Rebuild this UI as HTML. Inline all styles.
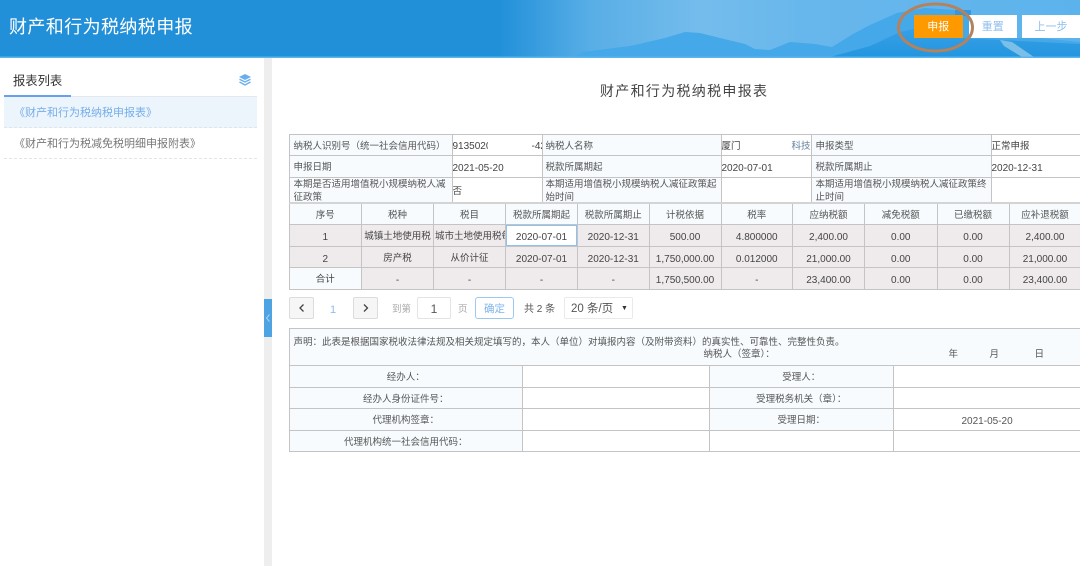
<!DOCTYPE html>
<html lang="zh">
<head>
<meta charset="utf-8">
<title>财产和行为税纳税申报</title>
<style>
*{box-sizing:border-box}
html,body{margin:0;padding:0;width:1080px;height:566px;overflow:hidden;background:#fff;
font-family:"Liberation Sans","Noto Sans CJK SC",sans-serif;color:#555}
#all{position:absolute;left:0;top:0;width:1080px;height:566px;overflow:hidden;filter:blur(.35px)}
.abs{position:absolute}
#hdr{position:absolute;left:0;top:0;width:1080px;height:58px;overflow:hidden;background:linear-gradient(90deg,#2290d9 0,#2290d9 500px,#58aee6 590px,#74bcec 700px,#68b7ec 800px,#5cb3ec 1080px)}
#hdr h1{position:absolute;left:9px;top:15px;margin:0;font-size:18px;line-height:25px;font-weight:400;color:#fff;letter-spacing:.4px;white-space:nowrap}
.btn{position:absolute;top:15px;height:23px;line-height:25px;text-align:center;font-size:11px;background:#fff;color:#8fbfee}
#side{position:absolute;left:0;top:58px;width:264px;height:508px;background:#fff}
#gut{position:absolute;left:264px;top:58px;width:8px;height:508px;background:#eeeeee}
#handle{position:absolute;left:264px;top:299px;width:8px;height:38px;background:#4ea3e3}
.tabline{position:absolute;left:4px;top:96px;width:253px;height:1px;background:#e4e8ee}
.tabact{position:absolute;left:4px;top:95px;width:67px;height:2px;background:#68a0ee}
.item{position:absolute;left:4px;width:253px;height:31px;line-height:32px;font-size:11px;padding-left:10px;white-space:nowrap;border-bottom:1px dashed #dfe5ea;color:#777}
table{position:absolute;border-collapse:collapse;table-layout:fixed;font-size:9.5px;color:#555}
td{border:1px solid #c4c4c4;padding:4px 0 0;overflow:hidden;white-space:nowrap;text-align:center;line-height:12px}
.l{background:#f7fbfd}
.tl{text-align:left;padding-left:4px}
.g{background:#efebec}
.n{font-size:10px;color:#444}
.n td{padding-top:6px}
.v{text-align:left;font-size:10px;color:#444;padding-top:4px}
.wrap{white-space:normal;text-align:left;padding:0 4px}
.wrap div{position:relative;top:1px;height:24px;overflow:hidden;line-height:12.5px}
.pbtn{position:absolute;top:297px;height:22px;border:1px solid #dcdcdc;border-radius:2px;background:#f6f6f6}
.ptxt{position:absolute;top:298px;line-height:24px;height:22px;font-size:10px;white-space:nowrap}
</style>
</head>
<body>
<div id="all">
<div id="hdr">
<svg class="abs" style="left:0;top:0" width="1080" height="58" viewBox="0 0 1080 58">
<defs><linearGradient id="rg" x1="0" y1="0" x2="0" y2="1"><stop offset="0" stop-color="#3aa1e6"/><stop offset="1" stop-color="#2295df"/></linearGradient></defs>
<path d="M575 57 L582 52 L630 46 L665 38 L685 32 L700 33 L720 38 L745 44 L755 49 L770 50 L790 42 L815 44 L832 47 L853 34 L870 25 L897 13 L925 8 L955 10 L985 20 L1000 38 L1040 38 L1080 42 L1080 58 L575 58 Z" fill="#45a8e9"/>
<path d="M830 57 L870 46 L900 32 L930 25 L960 38 L1000 40 L1080 44 L1080 58 L830 58Z" fill="url(#rg)"/>
<path d="M1000 40 L1012 42 L1034 57 L1022 57 L1004 46Z" fill="#7bbfe9"/>
<rect x="955" y="10" width="16" height="6" fill="#2f9ae3"/>
<rect x="0" y="56.5" width="1080" height="1.5" fill="#5ab5f0"/>
</svg>
<h1>财产和行为税纳税申报</h1>
<div class="btn" style="left:913.5px;width:49.5px;background:#fe9900;color:#fff">申报</div>
<div class="btn" style="left:968.5px;width:48.5px">重置</div>
<div class="btn" style="left:1022px;width:58px">上一步</div>
<svg class="abs" style="left:890px;top:0" width="90" height="58" viewBox="890 0 90 58">
<ellipse cx="935.5" cy="27.5" rx="37" ry="23.5" fill="none" stroke="#b5825c" stroke-width="3"/>
</svg>
</div>

<div id="side"></div>
<div id="gut"></div>
<div id="handle">
<svg width="8" height="38" viewBox="0 0 8 38"><path d="M5.5 15.5 L2.5 19 L5.5 22.5" fill="none" stroke="#a9d3f3" stroke-width="1"/></svg>
</div>

<div class="abs" style="left:13px;top:72px;font-size:12.3px;line-height:18px;color:#333;white-space:nowrap">报表列表</div>
<svg class="abs" style="left:238px;top:73px" width="14" height="14" viewBox="0 0 14 14">
<path d="M7 1 L13 4 L7 7 L1 4Z" fill="#6aaef0"/>
<path d="M1.5 6.3 L7 9 L12.5 6.3" fill="none" stroke="#6aaef0" stroke-width="1.4"/>
<path d="M1.5 9 L7 12 L12.5 9" fill="none" stroke="#6aaef0" stroke-width="1.4"/>
</svg>
<div class="tabline"></div>
<div class="tabact"></div>
<div class="item" style="top:97px;background:#ecf4fc;color:#76aeea">《财产和行为税纳税申报表》</div>
<div class="item" style="top:128px">《财产和行为税减免税明细申报附表》</div>

<div class="abs" style="left:600px;top:81px;font-size:14px;line-height:20px;letter-spacing:1.3px;color:#444;white-space:nowrap">财产和行为税纳税申报表</div>

<table style="left:288.5px;top:134px;width:797px">
<colgroup><col style="width:163px"><col style="width:90px"><col style="width:179px"><col style="width:90px"><col style="width:180px"><col style="width:95px"></colgroup>
<tr style="height:21px">
<td class="l tl">纳税人识别号（统一社会信用代码）</td>
<td class="v" style="position:relative;padding:0"><span style="position:absolute;left:0;top:6px;width:35px;overflow:hidden">9135020</span><span style="position:absolute;right:0;top:6px;width:10px;overflow:hidden">-42</span></td>
<td class="l tl" style="padding-left:3px">纳税人名称</td>
<td class="v" style="position:relative;font-size:9.5px;padding:0"><span style="position:absolute;left:0;top:6px">厦门</span><span style="position:absolute;right:0;top:6px;color:#5f7f9c">科技</span></td>
<td class="l tl">申报类型</td>
<td class="v" style="font-size:9.5px;padding-top:4px">正常申报</td>
</tr>
<tr style="height:22px">
<td class="l tl" style="padding-top:3px">申报日期</td>
<td class="v">2021-05-20</td>
<td class="l tl" style="padding:3px 0 0 3px">税款所属期起</td>
<td class="v">2020-07-01</td>
<td class="l tl" style="padding-top:3px">税款所属期止</td>
<td class="v">2020-12-31</td>
</tr>
<tr style="height:25px">
<td class="l wrap"><div>本期是否适用增值税小规模纳税人减征政策</div></td>
<td class="v" style="font-size:9.5px;padding-top:4px">否</td>
<td class="l wrap" style="padding-left:3px"><div>本期适用增值税小规模纳税人减征政策起始时间</div></td>
<td></td>
<td class="l wrap"><div>本期适用增值税小规模纳税人减征政策终止时间</div></td>
<td></td>
</tr>
</table>

<table style="left:288.5px;top:202px;width:792px;border-top:2px solid #d4d4d4">
<colgroup><col style="width:72.5px"><col style="width:72px"><col style="width:72px"><col style="width:72px"><col style="width:71.5px"><col style="width:72px"><col style="width:71.5px"><col style="width:72px"><col style="width:72.5px"><col style="width:72px"><col style="width:72px"></colgroup>
<tr style="height:21px" class="l">
<td>序号</td><td>税种</td><td>税目</td><td>税款所属期起</td><td>税款所属期止</td><td>计税依据</td><td>税率</td><td>应纳税额</td><td>减免税额</td><td>已缴税额</td><td>应补退税额</td>
</tr>
<tr style="height:22px" class="g n">
<td>1</td><td style="font-size:9.5px;padding-top:4px">城镇土地使用税</td><td style="font-size:9.5px;text-align:left;padding:4px 0 0 1px">城市土地使用税每</td><td style="background:#fff;box-shadow:inset 0 0 0 1px #8fc2ee">2020-07-01</td><td>2020-12-31</td><td>500.00</td><td>4.800000</td><td>2,400.00</td><td>0.00</td><td>0.00</td><td>2,400.00</td>
</tr>
<tr style="height:21px" class="g n">
<td>2</td><td style="font-size:9.5px;padding-top:4px">房产税</td><td style="font-size:9.5px;padding-top:4px">从价计征</td><td>2020-07-01</td><td>2020-12-31</td><td>1,750,000.00</td><td>0.012000</td><td>21,000.00</td><td>0.00</td><td>0.00</td><td>21,000.00</td>
</tr>
<tr style="height:22px" class="g n">
<td class="l" style="font-size:9.5px;padding-top:4px">合计</td><td>-</td><td>-</td><td>-</td><td>-</td><td>1,750,500.00</td><td>-</td><td>23,400.00</td><td>0.00</td><td>0.00</td><td>23,400.00</td>
</tr>
</table>

<div class="pbtn" style="left:288.5px;width:25px">
<svg width="23" height="20" viewBox="0 0 23 20"><path d="M13.5 6.5 L10 10 L13.5 13.5" fill="none" stroke="#444" stroke-width="1.3"/></svg>
</div>
<div class="ptxt" style="left:330px;font-size:11px;color:#8fbdf0">1</div>
<div class="pbtn" style="left:352.5px;width:25px">
<svg width="23" height="20" viewBox="0 0 23 20"><path d="M10 6.5 L13.5 10 L10 13.5" fill="none" stroke="#444" stroke-width="1.3"/></svg>
</div>
<div class="ptxt" style="left:392px;color:#aaa;font-size:9.5px">到第</div>
<div class="pbtn" style="left:417px;width:34px;background:#fff;border-color:#e4e4e4;text-align:center;font-size:12px;line-height:22px;color:#555">1</div>
<div class="ptxt" style="left:458px;color:#aaa;font-size:9.5px">页</div>
<div class="pbtn" style="left:475px;width:39px;background:#fff;border-color:#9cc8f2;text-align:center;font-size:10.5px;line-height:22px;color:#7fb4ec;border-radius:3px">确定</div>
<div class="ptxt" style="left:524px;color:#555;font-size:10px">共 2 条</div>
<div class="pbtn" style="left:564px;width:69px;background:#fff;border-color:#eaeaea;font-size:11.5px;line-height:22px;color:#555;padding-left:6px;white-space:nowrap">20 条/页<span style="position:absolute;left:56px;top:0;font-size:7px;color:#333">▼</span></div>

<table style="left:288.5px;top:327.5px;width:800px">
<colgroup><col style="width:233.5px"><col style="width:187px"><col style="width:183.5px"><col style="width:196px"></colgroup>
<tr style="height:37px"><td colspan="4" class="l" style="text-align:left;position:relative;vertical-align:top;padding:8px 0 0 4px;line-height:12px;overflow:visible">声明：此表是根据国家税收法律法规及相关规定填写的，本人（单位）对填报内容（及附带资料）的真实性、可靠性、完整性负责。<span style="position:absolute;left:414px;top:20px">纳税人（签章）：</span><span style="position:absolute;left:659px;top:20px">年</span><span style="position:absolute;left:700px;top:20px">月</span><span style="position:absolute;left:745px;top:20px">日</span></td></tr>
<tr style="height:22px"><td class="l">经办人：</td><td></td><td class="l">受理人：</td><td></td></tr>
<tr style="height:21px"><td class="l">经办人身份证件号：</td><td></td><td class="l">受理税务机关（章）：</td><td></td></tr>
<tr style="height:22px"><td class="l">代理机构签章：</td><td></td><td class="l">受理日期：</td><td style="text-align:left;padding:6px 0 0 68px;font-size:10px">2021-05-20</td></tr>
<tr style="height:21px"><td class="l">代理机构统一社会信用代码：</td><td></td><td></td><td></td></tr>
</table>
</div>
</body>
</html>
